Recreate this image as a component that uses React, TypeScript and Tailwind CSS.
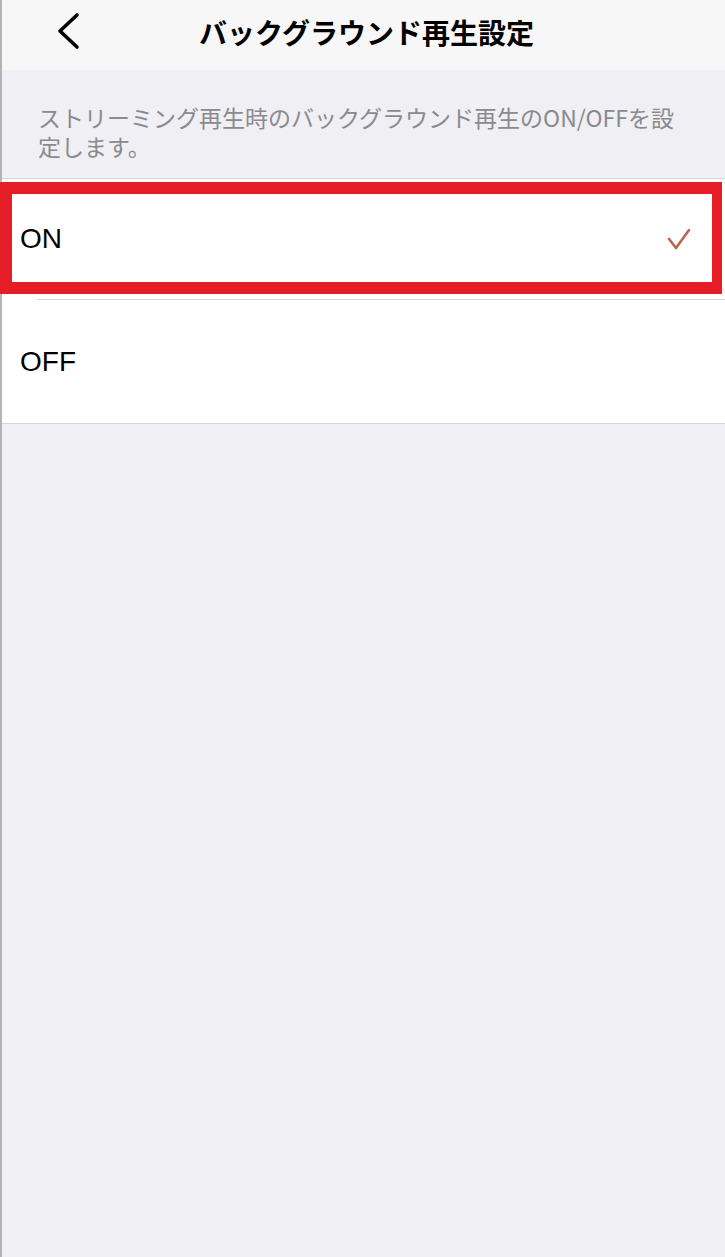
const jp = { fontFamily: '"Noto Sans CJK JP", "Noto Sans", sans-serif' };
const latin = { fontFamily: '"Liberation Sans", Arial, sans-serif' };

export default function App() {
  return (
    <div className="min-h-[1257px] w-[725px] bg-[#efeff4] border-l-2 border-[#b4b4b4]" style={jp}>
      <header className="h-[70px] bg-[#f7f7f7] flex items-center relative">
        <svg className="absolute left-[54px] top-[12px]" width="26" height="38" viewBox="0 0 26 38" fill="none">
          <polyline points="21,3 4,19 21,35" stroke="#000" strokeWidth="3.6" strokeLinecap="round" strokeLinejoin="round" />
        </svg>
        <h1 className="flex-1 text-center text-[28px] font-bold text-black pl-[6px] pb-[6px]">
          バックグラウンド再生設定
        </h1>
      </header>

      <p className="pl-[36px] pr-[40px] pt-[33px] pb-[17px] text-[23px] leading-[29px] text-[#8a8a8f]">
        ストリーミング再生時のバックグラウンド再生のON/OFFを設定します。
      </p>

      <div className="bg-white border-t border-b border-[#d6d6da]">
        <div className="relative h-[120px] flex items-center justify-between pl-[18px] pr-[34px]">
          <span className="text-[28px] text-black" style={latin}>ON</span>
          <svg width="24" height="22" viewBox="0 0 24 22" fill="none">
            <polyline points="2,11 9,20 22,2" stroke="#b8674b" strokeWidth="2.6" strokeLinecap="round" strokeLinejoin="round" />
          </svg>
          <div className="absolute top-[3px] left-[-2px] right-[3px] h-[112px] border-[12px] border-r-[10px] border-[#e41d26]" />
        </div>
        <div className="ml-[35px] border-t border-[#d6d6da]" />
        <div className="h-[123px] flex items-center pl-[18px]">
          <span className="text-[28px] text-black" style={latin}>OFF</span>
        </div>
      </div>
    </div>
  );
}
